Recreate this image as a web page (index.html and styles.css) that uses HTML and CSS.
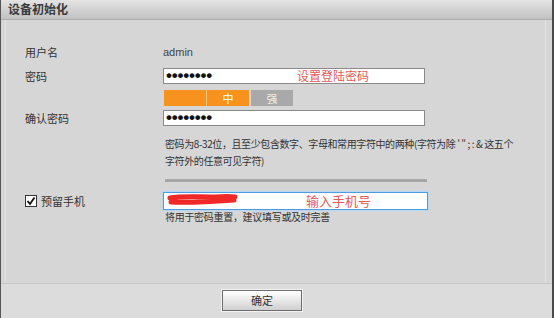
FILE: index.html
```html
<!DOCTYPE html>
<html lang="zh">
<head>
<meta charset="utf-8">
<title>设备初始化</title>
<link rel="stylesheet" href="styles.css">
</head>
<body>
<div class="dialog">
  <div class="titlebar">设备初始化</div>
  <div class="content">
    <div class="row row-user">
      <div class="label">用户名</div>
      <div class="value">admin</div>
    </div>
    <div class="row row-pass">
      <div class="label">密码</div>
      <div class="input pw"><span class="dots">••••••••</span><span class="hint-red">设置登陆密码</span></div>
    </div>
    <div class="row row-strength">
      <div class="label"></div>
      <div class="strength">
        <span class="seg on"></span>
        <span class="seg on mid">中</span>
        <span class="seg off">强</span>
      </div>
    </div>
    <div class="row row-confirm">
      <div class="label">确认密码</div>
      <div class="input pw"><span class="dots">••••••••</span></div>
    </div>
    <div class="row row-help">
      <div class="label"></div>
      <div class="help">密码为8-32位，且至少包含数字、字母和常用字符中的两种(字符为除 ' " ; : &amp; 这五个<br>字符外的任意可见字符)</div>
    </div>
    <div class="row row-sep">
      <div class="label"></div>
      <div class="sep"></div>
    </div>
    <div class="row row-phone">
      <div class="label check-label"><span class="checkbox"><svg width="10" height="10" viewBox="0 0 10 10"><path d="M1.5 5 L4 8 L8.5 1.5" fill="none" stroke="#111" stroke-width="1.8"/></svg></span>预留手机</div>
      <div class="input phone">
        <svg class="scribble" width="74" height="14" viewBox="0 0 74 14"><path d="M4 5 C 15 3, 30 4, 45 4 C 55 4, 62 3, 69 4 M5 9 C 20 10, 40 9, 68 7" fill="none" stroke="#f02828" stroke-width="5" stroke-linecap="round"/></svg>
        <span class="hint-red phone-hint">输入手机号</span>
      </div>
    </div>
    <div class="row row-note">
      <div class="label"></div>
      <div class="note">将用于密码重置，建议填写或及时完善</div>
    </div>
  </div>
  <div class="footer">
    <button class="btn">确定</button>
  </div>
</div>
</body>
</html>
```

FILE: styles.css
```css
html, body {
  margin: 0;
  padding: 0;
}
body {
  width: 554px;
  height: 318px;
  overflow: hidden;
  font-family: "Noto Sans CJK SC", "Liberation Sans", sans-serif;
  font-size: 11px;
  color: #333;
  background: #d6d6d6;
}
.dialog {
  width: 554px;
  height: 318px;
  box-sizing: border-box;
  border-left: 1px solid #555;
  border-right: 2px solid #4a4a4a;
  display: flex;
  flex-direction: column;
}
.titlebar {
  height: 19px;
  line-height: 18px;
  padding-left: 7px;
  font-size: 12px;
  font-weight: bold;
  color: #3a3a3a;
  background: linear-gradient(#e4e4e4, #d2d2d2 50%, #c2c2c2);
  border-bottom: 1px solid #acacac;
  flex: none;
}
.content {
  height: 263px;
  box-sizing: border-box;
  margin: 0 6px 0 4px;
  border-left: 1px solid #e2e2e2;
  border-right: 1px solid #e2e2e2;
  background: #d6d6d6;
  padding-top: 24px;
  padding-left: 19px;
  flex: none;
}
.row {
  display: flex;
  align-items: center;
}
.label {
  width: 138px;
  flex: none;
  color: #333;
}
.row-user { height: 16px; }
.value {
  font-family: "Liberation Sans", sans-serif;
  font-size: 11px;
  color: #444;
}
.row-pass { height: 16px; margin-top: 8px; }
.input {
  box-sizing: border-box;
  height: 16px;
  width: 262px;
  background: #fff;
  border: 1px solid #8a8a8a;
  display: flex;
  align-items: center;
  position: relative;
}
.dots {
  font-family: "Liberation Sans", sans-serif;
  font-size: 17px;
  font-weight: bold;
  letter-spacing: -0.2px;
  line-height: 14px;
  padding-left: 2px;
  color: #111;
  width: 131px;
}
.hint-red {
  color: #e75a5a;
  font-size: 12px;
  line-height: 14px;
}
.row-strength { height: 16px; margin-top: 6px; }
.strength {
  display: flex;
  gap: 1px;
  margin-left: 1px;
  height: 16px;
}
.seg {
  width: 42px;
  height: 16px;
  line-height: 16px;
  text-align: center;
  color: #fff;
  font-size: 11px;
}
.seg.on { background: #f7921e; }
.seg.mid { border-left: 1px solid #fbc77c; margin-left: -1px; }
.seg.off { background: #a9a9a9; margin-left: 1px; color: #eee; }
.row-confirm { height: 16px; margin-top: 4px; }
.row-help { margin-top: 9px; align-items: flex-start; }
.help {
  font-size: 10px;
  letter-spacing: -0.4px;
  line-height: 17px;
  margin-left: 2px;
  color: #333;
  white-space: nowrap;
}
.row-sep { margin-top: 10px; }
.sep {
  width: 262px;
  height: 3px;
  margin-left: 2px;
  background: #a6a6a6;
}
.row-phone { height: 18px; margin-top: 10px; }
.check-label {
  display: flex;
  align-items: center;
  gap: 4px;
}
.checkbox {
  width: 10px;
  height: 10px;
  background: #fff;
  border: 1px solid #333;
  display: flex;
  align-items: center;
  justify-content: center;
}
.input.phone {
  height: 18px;
  width: 265px;
  border: 1px solid #4f9be0;
  box-shadow: 0 0 1px 1px #b7d7f4;
}
.scribble {
  position: absolute;
  left: 2px;
  top: 0;
}
.phone-hint {
  position: absolute;
  left: 142px;
  top: 1px;
  font-size: 13px;
}
.row-note { margin-top: 0; height: 13px; }
.note {
  font-size: 10px;
  letter-spacing: -0.3px;
  line-height: 12px;
  margin-left: 2px;
  color: #333;
}
.footer {
  flex: 1;
  background: #dcdcdc;
  border-top: 1px solid #c6c6c6;
  display: flex;
  justify-content: flex-start;
  padding-top: 6px;
  padding-left: 221px;
  box-sizing: border-box;
}
.btn {
  width: 80px;
  height: 21px;
  border: 1px solid #6e6e6e;
  background: linear-gradient(#ffffff, #e8e8e8 50%, #cfcfcf);
  box-shadow: 0 0 0 1px #f2f2f2;
  font-family: "Noto Sans CJK SC", sans-serif;
  font-size: 11px;
  color: #333;
  padding: 0;
  line-height: 19px;
}
```
